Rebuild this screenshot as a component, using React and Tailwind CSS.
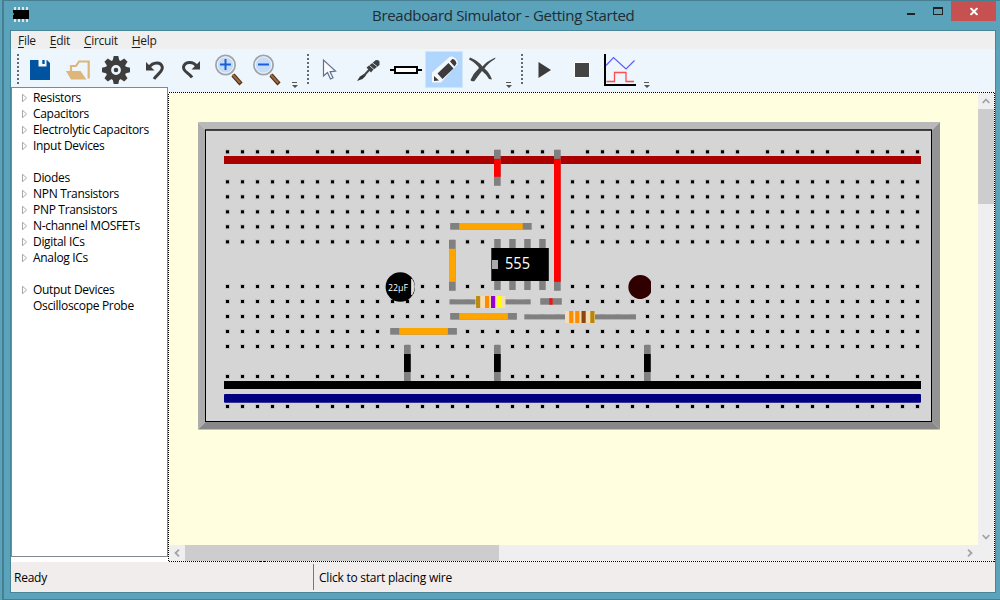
import React from 'react';

const GROUPS = [
  ['Resistors', 'Capacitors', 'Electrolytic Capacitors', 'Input Devices'],
  ['Diodes', 'NPN Transistors', 'PNP Transistors', 'N-channel MOSFETs', 'Digital ICs', 'Analog ICs'],
  ['Output Devices', 'Oscilloscope Probe'],
];
const MENUS = ['File', 'Edit', 'Circuit', 'Help'];

function TitleBar() {
  return (
    <header className="relative flex h-[30px] shrink-0 items-start justify-end">
      <svg className="absolute left-[7px] top-[6px]" width="16" height="16" shapeRendering="crispEdges">
        <path d="M1 0h2v15h-2zM5 0h2v15h-2zM9 0h2v15h-2zM13 0h2v15h-2z" fill="#dce6ea" />
        <path d="M0 3h16v9H0z" fill="#000" />
        <path d="M0 6h1v2H0z" fill="#777" />
      </svg>
      <h1 className="absolute left-[366px] top-[3px] whitespace-nowrap text-[15px] leading-[22px] tracking-[-0.3px] text-[#202c32]">
        Breadboard Simulator - Getting Started
      </h1>
      <svg width="40" height="20" className="mr-[7px]" shapeRendering="crispEdges">
        <path d="M3 12h8v2H3z" fill="#222" />
        <path fillRule="evenodd" d="M29 6h10v8H29zM30 8v5h8V8z" fill="#222" />
      </svg>
      <div className="mr-[4px] flex h-[20px] w-[45px] items-center justify-center bg-[#c75050]">
        <svg width="9" height="8" className="translate-x-[0.5px] translate-y-[0.5px]">
          <path d="M1 .5 8 7.500M8 .5 1 7.500" stroke="#fff" strokeWidth="1.900" />
        </svg>
      </div>
    </header>
  );
}

function Magnifier({ plus }) {
  return (
    <svg width="30" height="34" viewBox="0 0 30 34">
      <path d="M19 21 27 30" stroke="#4a2c18" strokeWidth="4.200" />
      <path d="M18.500 20.500 26.300 29" stroke="#a06a3a" strokeWidth="2.200" />
      <circle cx="11.500" cy="11" r="9.600" fill="#c5dcf8" stroke="#a0a3a6" strokeWidth="1.800" />
      <circle cx="11.500" cy="11" r="8.200" fill="none" stroke="#eef4fb" strokeWidth="1" />
      <path d="M6 10.500h11" stroke="#1c5fd0" strokeWidth="2" />
      {plus && <path d="M11.500 5v11" stroke="#1c5fd0" strokeWidth="2" />}
    </svg>
  );
}

function Toolbar() {
  return (
    <div className="flex h-[43px] shrink-0 bg-[#edf5fd]">
      <svg width="985" height="43" viewBox="11 49 985 43" className="shrink-0">
        <g fill="#68696b" shapeRendering="crispEdges">
          {[17, 307, 521].map((x) =>
            Array.from({ length: 8 }, (_, i) => <rect key={x + '-' + i} x={x} y={54 + i * 4} width="2" height="2" />)
          )}
        </g>
        <g id="save">
          <path d="M30 60h17l3 3v17H30z" fill="#0053a0" />
          <path d="M38.500 60h8v6.500h-8z" fill="#f3f7fc" />
          <path d="M42.300 60h2.400v4h-2.400z" fill="#0053a0" />
        </g>
        <g id="open">
          <path d="M71 71V66h5l3-4.500h9.700V78.500" fill="none" stroke="#deb679" strokeWidth="2.200" />
          <path d="M66 71h14.500l6 8.500H71z" fill="#deb679" />
        </g>
        <g id="settings" transform="translate(116 70)">
          {[0, 45, 90, 135].map((a) => (
            <path key={a} d="M-3.400-9-2.300-14H2.300L3.400-9V9L2.300 14h-4.600L-3.400 9z" fill="#3e3e3e" transform={`rotate(${a})`} />
          ))}
          <circle r="10.300" fill="#3e3e3e" />
          <circle r="3.600" fill="none" stroke="#edf5fd" strokeWidth="2.600" />
        </g>
        <g fill="none" stroke="#3e3e3e" strokeWidth="3">
          <path d="M149 67.500C153 61.500 161 61.500 162.300 67 163 71.500 157 74.500 154 79" />
          <path d="M197 66.500C193 60.500 184.500 61.500 183.500 67 183 71.500 189 73 192 77.500" />
        </g>
        <path d="M146 62v8.500h8.500zM200 61v8.500h-8.500z" fill="#3e3e3e" />
        <g transform="translate(214 54)"><Magnifier plus /></g>
        <g transform="translate(252 54)"><Magnifier /></g>
        {[292, 506, 644].map((x) => (
          <g key={x} fill="#555">
            <path d={`M${x} 82h5v1h-5zM${x} 85h6l-3 3z`} />
          </g>
        ))}
        <path d="M323.500 60v16l4-3.500 3 6.500 2.500-1.200-3-6 5.500-.8z" fill="#fbfcff" stroke="#5d7192" strokeWidth="1.200" />
        <g id="probe">
          <path d="M357 81 360 76.500 364 74 366 75.500 362.500 79z" fill="#333" />
          <path d="M363.500 76 370 69" stroke="#444" strokeWidth="2" />
          <path d="m366.500 67.500 6.500-5 2.500-2.200q3-1.200 4 1.200L379.500 65l-6.500 5-2 2.500z" fill="#3d4143" />
          <path d="m369.500 65.500 5 4.500m-2.500-7.500 5 4" stroke="#edf5fd" strokeWidth=".8" />
        </g>
        <path d="M390 69h4v2h-4zM418 69h4v2h-4z" fill="#000" />
        <path d="M395 67h22v6h-22z" fill="#fff" stroke="#000" strokeWidth="2" />
        <path d="M425.500 51.500h37v36h-37z" fill="#b1d6fd" stroke="#d3e5f8" />
        <g id="pencil">
          <path d="M432 82.500v-10L449.500 57q3-1.500 6 1.500t2 6L441 82.500z" fill="#f4f8fd" />
          <path d="m437.500 73.500 11-10.500 5 5.500L442.500 79zM450 61.500l2.300-2.500q3.200.2 4.200 4.500l-2 3zM434 76l5 4.500-5 .5z" fill="#3c3c3c" />
        </g>
        <path d="M470 57.500q8 3 12.500 9Q487 61 495.500 57.500l-.5 1.500q-7 4-10.500 9.500 5 4 7.500 11l-3-.5q-3-5-7-8-4 5-7.500 10-3 1-4-1 3-7 8.500-12-3-5-10-8.500z" fill="#424446" />
        <path d="M538.500 62v16L551 70z" fill="#3b3b3b" />
        <path d="M574.500 62.500h15v15h-15z" fill="#444" stroke="#fff" />
        <path d="M605 54v31h31" fill="none" stroke="#000" strokeWidth="2" />
        <path d="m606 65.500 7.500-8L626 69l8.500-8.500" fill="none" stroke="#5b5bff" strokeWidth="1.200" />
        <path d="M606.500 81.500H614.500V72.500H626v9h8" fill="none" stroke="#ff4d4d" strokeWidth="1.300" />
      </svg>
    </div>
  );
}

function Sidebar() {
  return (
    <aside className="-mt-[5px] flex w-[157px] shrink-0 flex-col bg-white pb-[5px]">
      <div className="flex flex-1 flex-col gap-4 border border-[#828790] pt-[2px]">
        {GROUPS.map((g) => (
          <ul key={g[0]}>
            {g.map((name) => (
              <li key={name} className="flex h-4 items-center pl-[10px]">
                <svg width="6" height="9" className="mr-[5px] -translate-y-[0.5px]">
                  {name !== 'Oscilloscope Probe' && <path d="M.5.700v7.600L4.500 4.500z" fill="none" stroke="#a6a6a6" />}
                </svg>
                <span className="whitespace-nowrap text-[12px] leading-4 tracking-[-0.31px] text-black">{name}</span>
              </li>
            ))}
          </ul>
        ))}
      </div>
    </aside>
  );
}

const RAIL_ROWS = [150, 375, 405];
const ROWS = [180, 195, 210, 225, 240, 285, 300, 315, 330, 345];

function Holes() {
  const cells = [];
  const add = (c, y) => cells.push([226 + c * 15, y]);
  for (let c = 0; c < 47; c++) {
    ROWS.forEach((y) => add(c, y));
    if (c % 6 !== 5) RAIL_ROWS.forEach((y) => add(c, y));
  }
  return (
    <g>
      {cells.map(([x, y]) => (
        <g key={x + '-' + y}>
          <rect x={x - 1} y={y - (y < 250 ? 0.6 : 1)} width="5" height="4.800" fill="#bebebe" />
          <rect x={x} y={y + (y < 250 ? 0.3 : 0)} width="3" height="3" fill="#000" />
        </g>
      ))}
    </g>
  );
}

function Wire({ x, y, w, h, color, cap = 9 }) {
  const horizontal = w > h;
  return (
    <g>
      <rect x={x} y={y} width={w} height={h} fill="#808080" />
      {horizontal ? (
        <rect x={x + cap} y={y} width={w - cap * 2} height={h} fill={color} />
      ) : (
        <rect x={x} y={y + cap} width={w} height={h - cap * 2} fill={color} />
      )}
    </g>
  );
}

function Resistor({ lead, body, bands }) {
  return (
    <g>
      <rect x={lead[0]} y={body[1] + 3.400} width={lead[1] - lead[0]} height="5" fill="#808080" />
      <rect x={body[0]} y={body[1]} width="30" height="12" fill="#f5deb3" />
      {bands.map(([x, color]) => (
        <rect key={x} x={x} y={body[1]} width="4.200" height="12" fill={color} />
      ))}
    </g>
  );
}

function Breadboard() {
  return (
    <svg width="809" height="452" viewBox="169 93 809 452" className="block bg-[#ffffdf]">
      <path d="M198 122h742l-8 8H206z" fill="#b9b9b9" />
      <path d="M198 122l8 8v291.500l-8 8z" fill="#adadad" />
      <path d="M940 122l-8 8v291.500l8 8z" fill="#939393" />
      <path d="M198 429.500h742l-8-8H206z" fill="#888" />
      <rect x="205.500" y="129.800" width="726" height="291.700" fill="#d5d5d5" stroke="#000" />
      <path d="M206 130.500h725" stroke="#444" />
      <Holes />
      <rect x="224" y="156" width="697" height="8" fill="#aa0000" />
      <rect x="224" y="381" width="697" height="8" fill="#000" />
      <rect x="224" y="394" width="697" height="8.700" rx="1" fill="#000080" />
      <Wire x={494} y={149.800} w={6.700} h={36} color="#f00" />
      <Wire x={554} y={149.800} w={6.700} h={141} color="#f00" />
      <Wire x={450.200} y={223} w={81.500} h={6.700} color="#ffa500" />
      <Wire x={449} y={239.800} w={6.700} h={51} color="#ffa500" />
      <g fill="#808080">
        {[494.200, 509.200, 524.200, 539.200].map((x) => (
          <path key={x} d={`M${x} 239h6.500v51h-6.500z`} />
        ))}
      </g>
      <rect x="491.300" y="248" width="57.500" height="33" fill="#000" />
      <rect x="492" y="260" width="6" height="9" fill="#aaa" />
      <text x="505" y="269" fontSize="15.500" textLength="25" lengthAdjust="spacingAndGlyphs" fill="#fff">555</text>
      <circle cx="400.300" cy="287" r="14.700" fill="#000" />
      <path d="M411.700 278.500v17q3.200-4 3.200-8.500t-3.200-8.500z" fill="#d5d5d5" />
      <path d="M411.800 279v16" stroke="#fff" />
      <text x="388" y="291" fontSize="9.500" fontWeight="500" textLength="20" lengthAdjust="spacingAndGlyphs" fill="#fff">22µF</text>
      <Wire x={450.200} y={313} w={66.700} h={6.700} color="#ffa500" />
      <Wire x={390.200} y={328} w={66.700} h={6.700} color="#ffa500" />
      <Resistor
        lead={[449.500, 530.700]}
        body={[475.500, 296]}
        bands={[[476, '#bd8a14'], [485, '#ff8c00'], [491, '#9400d3'], [497, '#ffff00']]}
      />
      <Resistor
        lead={[524.300, 636]}
        body={[565, 311]}
        bands={[[569.200, '#ff8c00'], [575.200, '#ff8c00'], [581.500, '#8b4513'], [590.300, '#b8860b']]}
      />
      <rect x="540.300" y="298.200" width="21.500" height="6.500" fill="#808080" />
      <rect x="549.300" y="298.200" width="3.300" height="6.500" fill="#f01414" />
      <path d="M651 281.500A12 12 0 1 0 651 292.500z" fill="#300000" />
      <Wire x={404} y={345} w={6.700} h={36} color="#000" />
      <Wire x={494} y={345} w={6.700} h={36} color="#000" />
      <Wire x={644} y={345} w={6.700} h={36} color="#000" />
    </svg>
  );
}

function Chevron({ className }) {
  return (
    <svg width="8" height="6" className={className}>
      <path d="M.7 5 4 1.500 7.300 5" fill="none" stroke="#a3a3a3" strokeWidth="1.800" />
    </svg>
  );
}

function Workspace() {
  return (
    <main className="relative flex min-w-0 flex-1 flex-col border border-transparent bg-[#efefef]">
      <svg className="pointer-events-none absolute -left-px -top-px" width="827" height="470">
        <rect x=".5" y=".5" width="826" height="469" fill="none" stroke="#fff" />
        <rect x=".5" y=".5" width="826" height="469" fill="none" stroke="#000" strokeDasharray="1 1" shapeRendering="crispEdges" />
      </svg>
      <div className="flex h-[452px]">
        <Breadboard />
        <div className="flex w-4 flex-col items-center justify-between">
          <div className="flex w-4 flex-col items-center">
            <div className="flex h-4 items-center"><Chevron /></div>
            <div className="h-[95px] w-4 bg-[#cdcdcd]" />
          </div>
          <div className="flex h-4 items-center"><Chevron className="rotate-180" /></div>
        </div>
      </div>
      <div className="flex h-4 w-[809px] items-center justify-between">
        <div className="flex h-4 items-center">
          <div className="flex w-4 justify-center"><Chevron className="-rotate-90" /></div>
          <div className="h-4 w-[314px] bg-[#cdcdcd]" />
        </div>
        <div className="flex w-4 justify-center"><Chevron className="rotate-90" /></div>
      </div>
    </main>
  );
}

export default function App() {
  return (
    <div className="flex h-[600px] w-[1000px] overflow-hidden bg-[#5ba2bb] font-['Open_Sans','Noto_Sans',sans-serif]">
      <div className="w-[2px]" />
      <div className="flex w-[998px] flex-col border-b border-l-2 border-t border-[#457f91] pl-[6px]">
        <div className="-mb-px -ml-[4px]"><TitleBar /></div>
        <div className="flex h-[563px] w-[986px] flex-col border border-[#488599] bg-white">
          <nav className="flex h-[18px] shrink-0 items-center bg-[#efefef] pl-[7px]">
            {MENUS.map((m) => (
              <span key={m} className="mr-[14px] pt-[2px] text-[12px] leading-[18px] tracking-[-0.3px] text-[#1c1c1c]">
                <span className="underline underline-offset-2">{m[0]}</span>
                {m.slice(1)}
              </span>
            ))}
          </nav>
          <Toolbar />
          <div className="flex h-[470px] shrink-0">
            <Sidebar />
            <Workspace />
          </div>
          <footer className="flex h-[30px] shrink-0 items-center bg-[#f1edec] text-[12px] tracking-[-0.23px] text-black">
            <div className="w-[302px] pl-[3px] pt-[2px]">Ready</div>
            <div className="h-[26px] w-px bg-[#777]" />
            <div className="pl-[5px] pt-[2px]">Click to start placing wire</div>
          </footer>
        </div>
      </div>
    </div>
  );
}
